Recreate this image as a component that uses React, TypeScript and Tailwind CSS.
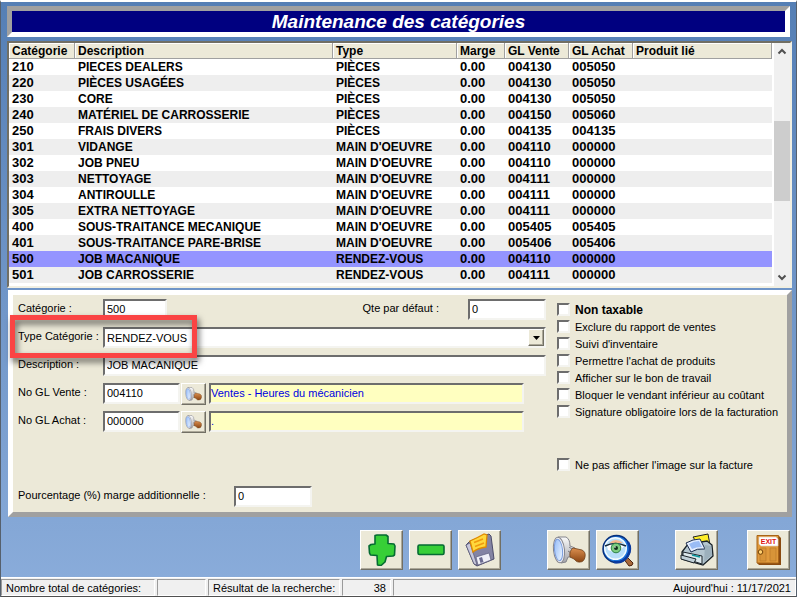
import React from "react";

type Row = [string, string, string, string, string];

const rows: Row[] = [
  ["210", "PIECES DEALERS", "PIÈCES", "004130", "005050"],
  ["220", "PIÈCES USAGÉES", "PIÈCES", "004130", "005050"],
  ["230", "CORE", "PIÈCES", "004130", "005050"],
  ["240", "MATÉRIEL DE CARROSSERIE", "PIÈCES", "004150", "005060"],
  ["250", "FRAIS DIVERS", "PIÈCES", "004135", "004135"],
  ["301", "VIDANGE", "MAIN D'OEUVRE", "004110", "000000"],
  ["302", "JOB PNEU", "MAIN D'OEUVRE", "004110", "000000"],
  ["303", "NETTOYAGE", "MAIN D'OEUVRE", "004111", "000000"],
  ["304", "ANTIROULLE", "MAIN D'OEUVRE", "004111", "000000"],
  ["305", "EXTRA NETTOYAGE", "MAIN D'OEUVRE", "004111", "000000"],
  ["400", "SOUS-TRAITANCE MECANIQUE", "MAIN D'OEUVRE", "005405", "005405"],
  ["401", "SOUS-TRAITANCE PARE-BRISE", "MAIN D'OEUVRE", "005406", "005406"],
  ["500", "JOB MACANIQUE", "RENDEZ-VOUS", "004110", "000000"],
  ["501", "JOB CARROSSERIE", "RENDEZ-VOUS", "004111", "000000"],
  ["502", "ESCOMP PNEUS", "RENDEZ-VOUS", "004110", "000000"],
];

const headers = ["Catégorie", "Description", "Type", "Marge", "GL Vente", "GL Achat", "Produit lié"];

const sunken =
  "border-2 border-t-[#6d6d6d] border-l-[#6d6d6d] border-r-[#f4f4f0] border-b-[#f4f4f0] rounded-none outline-none";
const raised =
  "border border-t-white border-l-white border-r-[#716f64] border-b-[#716f64] bg-[#ece9d8] shadow-[inset_-1px_-1px_0_#aca899] flex items-center justify-center";

function Field({ id, value, className }: { id: string; value: string; className: string }) {
  return (
    <input
      id={id}
      defaultValue={value}
      className={`${sunken} block h-[21px] bg-white px-0.5 pb-0.5 leading-4 text-black ${className}`}
    />
  );
}

function Label({ htmlFor, children }: { htmlFor: string; children: React.ReactNode }) {
  return (
    <label htmlFor={htmlFor} className="block w-[85px] shrink-0 whitespace-nowrap leading-[18px]">
      {children}
    </label>
  );
}

function Check({ id, label, bold }: { id: string; label: string; bold?: boolean }) {
  return (
    <div className="flex h-[17px] items-start">
      <input
        id={id}
        type="checkbox"
        className={`${sunken} size-[13px] shrink-0 appearance-none bg-white checked:bg-gray-500`}
      />
      <label
        htmlFor={id}
        className={`ml-[5px] whitespace-nowrap leading-[14px] ${bold ? "text-[12px] font-bold" : ""}`}
      >
        {label}
      </label>
    </div>
  );
}

function Lamp({ className }: { className: string }) {
  return (
    <svg viewBox="0 0 34 28" className={className} aria-hidden="true">
      <defs>
        <linearGradient id="lens" x1="0" y1="0" x2="1" y2="1">
          <stop offset="0" stopColor="#8fb8f8" />
          <stop offset="1" stopColor="#f4faff" />
        </linearGradient>
        <linearGradient id="cone" x1="0" y1="0" x2="0" y2="1">
          <stop offset="0" stopColor="#fafafa" />
          <stop offset="1" stopColor="#a2a2a8" />
        </linearGradient>
        <linearGradient id="handle" x1="0" y1="0" x2="0" y2="1">
          <stop offset="0" stopColor="#dc9050" />
          <stop offset="1" stopColor="#8a4412" />
        </linearGradient>
      </defs>
      <path d="M6 1 L14 1 Q18 3 18 10 L23 12 L21 21 L16 21 L14 26 L9 27 Z" fill="url(#cone)" stroke="#85858c" />
      <path d="M17 11 L20 13 M16 15 L19 17" stroke="#77777d" />
      <path
        d="M21 12 L30 14 Q34 16 33 21 Q32 26 28 26 Q25 27 22 23 L18 21 Q17 15 21 12 Z"
        fill="url(#handle)"
        stroke="#70401a"
        strokeWidth=".8"
      />
      <ellipse cx="7" cy="14" rx="5.500" ry="12.800" fill="#f0f0f6" stroke="#85858c" transform="rotate(-6 7 14)" />
      <ellipse cx="6.500" cy="14" rx="4" ry="10.800" fill="url(#lens)" stroke="#7a9cdc" transform="rotate(-6 6.500 14)" />
    </svg>
  );
}

function PlusIcon() {
  return (
    <svg viewBox="0 0 28 32" className="h-8 w-7" aria-hidden="true">
      <path
        d="M7 1.5 L9 1 L18 1 L20 2.5 L20 9.5 L26 10 L27 12 L26.5 21 L25 22 L18.5 22.5 L17 28 L13 31.5 L9.5 31 L9 21.5 L2.5 21 L1.5 19 L1 12 L3 10.5 L7 10 Z"
        fill="#37cf37"
        stroke="#056b32"
        strokeWidth="1.6"
        strokeLinejoin="round"
      />
    </svg>
  );
}

function MinusIcon() {
  return (
    <svg viewBox="0 0 28 12" className="h-3 w-7" aria-hidden="true">
      <rect x="1" y="1" width="26" height="9.5" rx="1.5" fill="#37cf37" stroke="#056b32" strokeWidth="1.6" />
    </svg>
  );
}

function FloppyIcon() {
  return (
    <svg viewBox="0 0 32 34" className="h-[34px] w-8" aria-hidden="true">
      <path d="M2 12 L6 8 L25 1 L27 3 L30 26 L13 33 L10 31 Z" fill="#8484a4" stroke="#4c4c6c" />
      <path d="M2 12 L6 10 L13 32 L10 31 Z" fill="#c8c8dc" stroke="#4c4c6c" strokeWidth=".6" />
      <path d="M6 8 Q13 5 20 1 L23 2 L22 14 Q14 15 9 19 Z" fill="#ffd83c" stroke="#e08a00" strokeWidth="1.3" />
      <path d="M10 9.500 L19 6 M11 13.500 L20 10" stroke="#f09a10" strokeWidth="1.6" />
      <path d="M12 24 L25 20 L27 27 L14 32 Z" fill="#f0f0f8" stroke="#5c5c7c" strokeWidth=".7" />
      <path d="M15 25 L18 24 L19.500 29 L16.500 30 Z" fill="#6c6c92" />
    </svg>
  );
}

function EyeIcon() {
  return (
    <svg viewBox="0 0 33 33" className="size-[33px]" aria-hidden="true">
      <path d="M22 24 L25 22 L32 29 Q32 32 28 32 Z" fill="#a8683a" stroke="#4c2410" />
      <circle cx="15.500" cy="15" r="13.500" fill="#1d74dc" stroke="#08307c" strokeWidth="1.500" />
      <path d="M27 8 A13.500 13.500 0 0 1 13 28" fill="none" stroke="#0a3aa0" strokeWidth="2.500" />
      <circle cx="14.500" cy="14.500" r="10.800" fill="#b8defa" stroke="#f4fcff" strokeWidth="1.400" />
      <path d="M8 9 Q15 3 22 9 Z" fill="#f2b890" />
      <path d="M6 12 Q14 8 23 12 Q17 21 7 16 Z" fill="#fff" />
      <path d="M4 12 Q14 7 25 12" fill="none" stroke="#182838" strokeWidth="1.400" />
      <circle cx="15" cy="14" r="4.800" fill="#7ccc80" stroke="#2c8048" />
      <circle cx="15" cy="14" r="2" fill="#10301c" />
      <circle cx="14" cy="13" r=".8" fill="#fff" />
    </svg>
  );
}

function PrinterIcon() {
  return (
    <svg viewBox="0 0 34 34" className="size-[34px]" aria-hidden="true">
      <path d="M13 4 L28 1 L30 12 L19 13 Z" fill="#ffee28" stroke="#222" />
      <path d="M2 19 L8 11 L27 8 L32 12 L33 23 L23 32 L2 26 Z" fill="#b4c6d0" stroke="#1a2228" strokeWidth="1.300" />
      <path d="M6 10 Q13 6 20 6 L25 16 Q17 15 11 19 Z" fill="#e4eeff" stroke="#1c2c4c" />
      <path d="M9 11 Q14 8 19 8 L22 14 Q16 14 12 16 Z" fill="#9abcf4" />
      <path d="M25 12 L31 13 L32 22 L24 29 Z" fill="#9cb0bc" />
      <path d="M3 19 L22 23 L22 31 L3 25 Z" fill="#dce8ec" stroke="#1a2228" />
      <path d="M1 22 L16 26 L14 30 L1 26 Z" fill="#c0d0d8" stroke="#1a2228" />
      <path d="M12 22 L20 24" stroke="#0a98a0" strokeWidth="1.500" />
    </svg>
  );
}

function ExitIcon() {
  return (
    <svg viewBox="0 0 26 32" className="h-8 w-[26px]" aria-hidden="true">
      <path d="M1 2 H23 L25 4 V31 H3 L1 29 Z" fill="#8a4a10" />
      <path d="M1 1.500 H22.500 V29 H1 Z" fill="#e09a3c" stroke="#a86418" />
      <path d="M4 14 H10 V27 H4 Z M14 14 H20 V27 H14 Z" fill="#d89438" stroke="#bc7828" strokeWidth=".7" />
      <path d="M3 3 H20 L22 5 V12 H5 L3 10 Z" fill="#fff" stroke="#d8c8c0" strokeWidth=".6" />
      <text x="12.500" y="10" textAnchor="middle" fontSize="7" fontWeight="700" fill="#e01010" fontFamily="Liberation Sans, sans-serif">
        EXIT
      </text>
      <circle cx="4.500" cy="18" r="2.300" fill="#ffd070" stroke="#704008" />
    </svg>
  );
}

function ToolButton({ label, children }: { label: string; children: React.ReactNode }) {
  return (
    <button type="button" aria-label={label} title={label} className={`${raised} h-10 w-[43px]`}>
      {children}
    </button>
  );
}

const cell = "border border-t-[#9a9a9a] border-l-[#9a9a9a] border-r-white border-b-white px-1 whitespace-nowrap";

export default function App() {
  return (
    <main className="flex min-h-screen flex-col border-t-2 border-r border-l border-t-white border-r-[#56606c] border-l-[#56606c] bg-linear-to-b from-[#557fb5] to-[#8baddb] font-['Liberation_Sans',sans-serif] text-[11px] text-black">
      <h1 className="mx-1.5 mt-1 mb-1 h-[31px] border-[5px] border-t-[#a0a0a0] border-r-white border-b-white border-l-[#a0a0a0] bg-[#000080] text-center text-[19px] leading-[22px] font-bold text-white italic">
        Maintenance des catégories
      </h1>

      <section className="mr-1 ml-1.5 flex h-[247px] border-2 border-t-[#716f64] border-r-[#f1efe2] border-b-[#f1efe2] border-l-[#716f64] bg-white text-[12px]">
        <div className="min-w-0 flex-1 overflow-hidden">
          <table className="w-full table-fixed border-collapse text-left font-bold">
            <colgroup>
              <col className="w-[66px]" />
              <col className="w-[258px]" />
              <col className="w-[124px]" />
              <col className="w-12" />
              <col className="w-16" />
              <col className="w-16" />
              <col />
            </colgroup>
            <thead>
              <tr className="h-4 bg-[#ece9d8]">
                {headers.map((h) => (
                  <th
                    key={h}
                    className="h-4 p-0 pl-[3px] leading-4 whitespace-nowrap shadow-[inset_-1px_-1px_0_#a0a0a0,inset_1px_1px_0_#fff]"
                  >
                    {h}
                  </th>
                ))}
              </tr>
            </thead>
            <tbody>
              {rows.map(([code, desc, type, sale, buy], i) => (
                <tr
                  key={code}
                  className={`h-4 leading-4 whitespace-nowrap ${code === "500" ? "bg-[#9494ff]" : i % 2 ? "bg-[#eeeeee]" : "bg-white"}`}
                >
                  {[code, desc, type, "0.00", sale, buy, ""].map((v, k) => (
                    <td key={k} className={`h-4 p-0 pl-[3px] ${k === 1 || k === 2 ? "" : "text-[13px] leading-4"}`}>
                      {v}
                    </td>
                  ))}
                </tr>
              ))}
            </tbody>
          </table>
        </div>
        <div className="ml-0.5 flex w-4 flex-col items-center bg-[#f0f0f0]" aria-hidden="true">
          <svg viewBox="0 0 16 17" className="h-[17px] w-4">
            <path d="M4.500 10.500 L8 7 L11.500 10.500" fill="none" stroke="#505050" strokeWidth="2" />
          </svg>
          <div className="mt-[61px] h-20 w-full bg-[#cdcdcd]" />
          <svg viewBox="0 0 16 17" className="mt-auto h-[17px] w-4">
            <path d="M4.500 6.500 L8 10 L11.500 6.500" fill="none" stroke="#505050" strokeWidth="2" />
          </svg>
        </div>
      </section>

      <form
        className="relative mt-0.5 mr-1 ml-[7px] flex h-[227px] border-[5px] border-t-white border-r-[#a0a0a0] border-b-[#a0a0a0] border-l-white bg-[#ece9d8] pt-1 pl-[5px]"
        onSubmit={(e) => e.preventDefault()}
      >
        <div className="flex w-[528px] shrink-0 flex-col">
          <div className="flex h-7">
            <Label htmlFor="categorie">Catégorie :</Label>
            <Field id="categorie" value="500" className="w-16" />
            <label htmlFor="qte" className="mr-[29px] ml-auto leading-[18px]">
              Qte par défaut :
            </label>
            <Field id="qte" value="0" className="w-[78px]" />
          </div>
          <div className="flex h-7">
            <Label htmlFor="type">Type Catégorie :</Label>
            <div className="relative h-[21px] flex-1">
              <select id="type" className={`${sunken} h-full w-full appearance-none bg-white px-0.5 leading-4`}>
                <option>RENDEZ-VOUS</option>
              </select>
              <span className={`${raised} pointer-events-none absolute top-0.5 right-0.5 h-[17px] w-4`}>
                <svg viewBox="0 0 7 4" className="h-1 w-[7px]" aria-hidden="true">
                  <path d="M0 0 H7 L3.500 4 Z" fill="#000" />
                </svg>
              </span>
            </div>
          </div>
          <div className="flex h-7">
            <Label htmlFor="description">Description :</Label>
            <Field id="description" value="JOB MACANIQUE" className="flex-1" />
          </div>
          <div className="flex h-7">
            <Label htmlFor="vente">No GL Vente :</Label>
            <Field id="vente" value="004110" className="w-[77px]" />
            <button type="button" aria-label="Rechercher GL Vente" className={`${raised} ml-px h-[22px] w-[25px]`}>
              <Lamp className="h-[14px] w-[17px]" />
            </button>
            <input
              aria-label="Nom GL Vente"
              readOnly
              value="Ventes - Heures du mécanicien"
              className={`${sunken} ml-[3px] h-[21px] w-[315px] bg-[#ffffc0] pb-0.5 text-[#0000e0]`}
            />
          </div>
          <div className="flex h-[75px]">
            <Label htmlFor="achat">No GL Achat :</Label>
            <Field id="achat" value="000000" className="w-[77px]" />
            <button type="button" aria-label="Rechercher GL Achat" className={`${raised} ml-px h-[22px] w-[25px]`}>
              <Lamp className="h-[14px] w-[17px]" />
            </button>
            <input
              aria-label="Nom GL Achat"
              readOnly
              value="."
              className={`${sunken} ml-[3px] h-[21px] w-[315px] bg-[#ffffc0] pb-0.5 text-[#0000e0]`}
            />
          </div>
          <div className="flex">
            <label htmlFor="pourcentage" className="w-[216px] leading-[18px] whitespace-nowrap">
              Pourcentage (%) marge additionnelle :
            </label>
            <Field id="pourcentage" value="0" className="w-[78px]" />
          </div>
        </div>

        <div className="mt-1 ml-[11px] flex flex-col">
          <Check id="taxable" label="Non taxable" bold />
          <Check id="exclure" label="Exclure du rapport de ventes" />
          <Check id="suivi" label="Suivi d'inventaire" />
          <Check id="permettre" label="Permettre l'achat de produits" />
          <Check id="afficher" label="Afficher sur le bon de travail" />
          <Check id="bloquer" label="Bloquer le vendant inférieur au coûtant" />
          <Check id="signature" label="Signature obligatoire lors de la facturation" />
          <div className="mt-9">
            <Check id="image" label="Ne pas afficher l'image sur la facture" />
          </div>
        </div>

        <div className="pointer-events-none absolute top-5 -left-[3px] h-[43px] w-[187px] border-[5px] border-[#fa4444] drop-shadow-[2px_4px_3px_rgba(0,0,0,0.6)]" />
      </form>

      <div className="flex flex-1 items-start justify-end pt-[13px] pr-1.5">
        <div className="flex gap-1.5">
          <ToolButton label="Ajouter"><PlusIcon /></ToolButton>
          <ToolButton label="Supprimer"><MinusIcon /></ToolButton>
          <ToolButton label="Enregistrer"><FloppyIcon /></ToolButton>
        </div>
        <div className="ml-[46px] flex gap-1.5">
          <ToolButton label="Rechercher"><Lamp className="h-7 w-[34px]" /></ToolButton>
          <ToolButton label="Visualiser"><EyeIcon /></ToolButton>
        </div>
        <div className="ml-9 flex gap-[29px]">
          <ToolButton label="Imprimer"><PrinterIcon /></ToolButton>
          <ToolButton label="Quitter"><ExitIcon /></ToolButton>
        </div>
      </div>

      <footer className="flex h-5 gap-0.5 border-t border-b border-t-white border-b-[#505050] bg-[#f0f0f0] pt-px leading-4">
        <div className={`${cell} w-[154px]`}>Nombre total de catégories:</div>
        <div className={`${cell} w-[49px]`} />
        <div className={`${cell} w-[132px]`}>Résultat de la recherche:</div>
        <div className={`${cell} w-[49px] text-right`}>38</div>
        <div className={`${cell} flex-1 text-right`}>Aujourd'hui : 11/17/2021</div>
      </footer>
    </main>
  );
}
